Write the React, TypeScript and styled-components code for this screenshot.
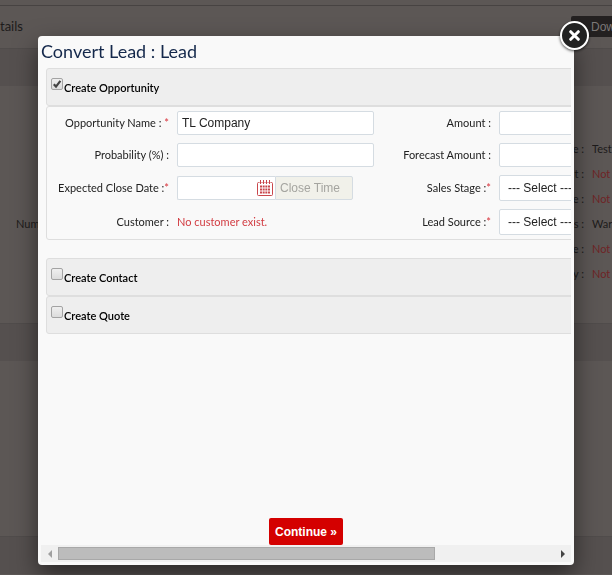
import React, { useRef, useState } from "react";
import styled, { createGlobalStyle } from "styled-components";

const GlobalStyle = createGlobalStyle`
  * { box-sizing: border-box; }
  html, body, #root { height: 100%; }
  body {
    margin: 0;
    overflow: hidden;
    background: #5c5755;
    font-family: Lato, "Liberation Sans", sans-serif;
    font-size: 11px;
    color: #222;
  }
  button, input, select { font-family: "Liberation Sans", Arial, sans-serif; font-size: 12px; }
`;

/* Dimmed page behind the dialog */

const Page = styled.main`
  min-height: 100%;
  padding-top: 5px;
  color: #1d1b1b;
`;

const PageHeader = styled.header`
  display: flex;
  align-items: flex-start;
  justify-content: space-between;
  height: 43px;
  padding-top: 10px;
  border-top: 1px solid #474342;
`;

const PageTitle = styled.h1`
  margin: 0;
  font-size: 13px;
  line-height: 21px;
  font-weight: 400;
`;

const DownloadButton = styled.button`
  width: 41px;
  height: 21px;
  padding: 0 0 0 20px;
  border: 0;
  border-radius: 2px 0 0 2px;
  background: #232020;
  color: #7d7978;
  text-align: left;
  white-space: nowrap;
  overflow: hidden;
`;

const Band = styled.div`
  height: 38px;
  background: #55504f;
  border-top: 1px solid #504c4b;
`;

const PageBody = styled.section`
  display: flex;
  justify-content: space-between;
  height: 237px;
  padding-top: 50px;
  line-height: 25px;
`;

const PageGap = styled.section`
  height: 175px;
`;

const LeftLabel = styled.div`
  padding: 75px 0 0 16px;
`;

const Facts = styled.dl`
  display: grid;
  grid-template-columns: auto 20px;
  grid-auto-rows: 25px;
  column-gap: 8px;
  margin: 0;
  white-space: nowrap;
`;

const FactName = styled.dt`
  text-align: right;
`;

const FactValue = styled.dd<{ $missing: boolean }>`
  margin: 0;
  overflow: hidden;
  color: ${(p) => (p.$missing ? "#6f2426" : "#1d1b1b")};
`;

/* Dialog */

const Dialog = styled.div`
  position: fixed;
  inset: 36px 38px 10px 38px;
  display: flex;
  flex-direction: column;
  padding: 3px;
  border-radius: 4px;
  background: #f9f9f9;
  box-shadow: 0 10px 25px rgba(0, 0, 0, 0.5);
`;

const CloseButton = styled.button`
  position: absolute;
  top: -15px;
  right: -15px;
  width: 29px;
  height: 29px;
  padding: 0;
  border: 2px solid #fff;
  border-radius: 50%;
  background: #222;
  box-shadow: 0 1px 3px rgba(0, 0, 0, 0.7);
  display: grid;
  place-items: center;
`;

const Viewport = styled.div`
  flex: 1;
  min-height: 0;
  overflow: hidden;
`;

const Content = styled.form`
  width: 697px;
`;

const Title = styled.h2`
  margin: 0;
  height: 29px;
  font-size: 18px;
  line-height: 25px;
  font-weight: 400;
  color: #14284b;
`;

const Sections = styled.div`
  padding: 0 5px;
`;

const SectionHead = styled.label`
  display: flex;
  align-items: center;
  height: 38px;
  padding-left: 4px;
  border: 1px solid #dedede;
  border-radius: 3px;
  background: #eee;
  color: #000;
  font-weight: 600;
`;

const Tick = styled.input`
  appearance: none;
  width: 12px;
  height: 12px;
  margin: 0 1px 6px 0;
  border: 1px solid #a3a3a3;
  border-radius: 2px;
  background: linear-gradient(#efefef, #dcdcdc);
  &:checked {
    background: url("data:image/svg+xml,%3Csvg xmlns='http://www.w3.org/2000/svg' viewBox='0 0 10 10'%3E%3Cpath d='M1.8 5.2 4 7.6 8.4 1.8' fill='none' stroke='%23444' stroke-width='2.2'/%3E%3C/svg%3E"),
      linear-gradient(#efefef, #dcdcdc);
  }
`;

const Fields = styled.div`
  display: grid;
  grid-template-columns: 122px 197px 109px 197px;
  grid-template-rows: 24px 24px 26px 26px;
  gap: 8px;
  align-items: center;
  margin-bottom: 18px;
  padding: 4px 0;
  border: 1px solid #dedede;
  border-radius: 3px;
`;

const FieldLabel = styled.label`
  text-align: right;
  white-space: nowrap;
  line-height: 16px;
`;

const Required = styled.span`
  color: #d9363e;
`;

const TextBox = styled.input`
  width: 100%;
  height: 24px;
  padding: 0 4px;
  border: 1px solid #d5dce2;
  border-radius: 2px;
  background: #fff;
  color: #222;
`;

const Select = styled.select`
  appearance: none;
  width: 100%;
  height: 26px;
  padding: 0 8px;
  border: 1px solid #d5dce2;
  border-radius: 2px;
  background: #fff;
  color: #222;
`;

const DateGroup = styled.div`
  display: flex;
  height: 24px;
`;

const DateBox = styled.div`
  display: flex;
  align-items: center;
  width: 98px;
  padding-right: 2px;
  border: 1px solid #d5dce2;
  border-right: 0;
  border-radius: 2px 0 0 2px;
  background: #fff;
`;

const DateInput = styled.input`
  flex: 1;
  min-width: 0;
  height: 22px;
  padding: 0 4px;
  border: 0;
  background: none;
`;

const IconButton = styled.button`
  display: flex;
  padding: 0;
  border: 0;
  background: none;
`;

const TimeInput = styled.input`
  width: 78px;
  padding: 0 4px;
  border: 1px solid #d5dce2;
  border-radius: 0 2px 2px 0;
  background: #f1f1ea;
  &::placeholder { color: #a5a5a0; opacity: 1; }
`;

const Notice = styled.span`
  line-height: 16px;
  color: #d23c42;
`;

const Footer = styled.div`
  display: flex;
  justify-content: center;
`;

const ContinueButton = styled.button`
  height: 27px;
  padding: 0 6px;
  border: 0;
  border-radius: 2px;
  background: #d40000;
  color: #fff;
  font-weight: 700;
`;

const Scrollbar = styled.div`
  display: flex;
  height: 17px;
  background: #f0f0f0;
`;

const ArrowButton = styled.button`
  width: 17px;
  padding: 0;
  border: 0;
  background: none;
  display: grid;
  place-items: center;
`;

const Track = styled.div`
  flex: 1;
  padding: 2px 0;
`;

const Thumb = styled.div`
  width: 76%;
  height: 13px;
  border: 1px solid #a8a8a8;
  background: #bcbcbc;
`;

const CalendarIcon = () => (
  <svg width="16" height="16" viewBox="0 0 16 16" fill="none" stroke="#c9474c" aria-hidden="true">
    <path d="M2.5 2.5h-1a1 1 0 0 0-1 1v11a1 1 0 0 0 1 1h13a1 1 0 0 0 1-1v-11a1 1 0 0 0-1-1h-1M4.5 2.5h1M7.5 2.5h1M10.5 2.5h1" />
    <path d="M3.5 0v4M6.5 0v4M9.5 0v4M12.5 0v4" />
    <path d="M3 6.5h10M3 9.5h10M3 12.5h10" strokeWidth="2" strokeDasharray="2 0.67" />
  </svg>
);

const CloseIcon = () => (
  <svg width="11" height="11" viewBox="0 0 11 11" stroke="#fff" strokeWidth="3" strokeLinecap="round" aria-hidden="true">
    <path d="M1.7 1.7l7.6 7.6M9.3 1.7L1.7 9.3" />
  </svg>
);

const facts: [string, string, boolean][] = [
  ["e :", "Test", false],
  ["t :", "Not", true],
  ["e :", "Not", true],
  ["s :", "War", false],
  ["e :", "Not", true],
  ["y :", "Not", true],
];

export default function App() {
  const viewport = useRef<HTMLDivElement>(null);
  const [offset, setOffset] = useState(0);

  const scroll = (step: number) => {
    const el = viewport.current;
    if (!el) return;
    el.scrollLeft += step;
    setOffset((el.scrollLeft / el.scrollWidth) * 100);
  };

  return (
    <>
      <GlobalStyle />
      <Page>
        <PageHeader>
          <PageTitle>tails</PageTitle>
          <DownloadButton type="button">Dow</DownloadButton>
        </PageHeader>
        <Band />
        <PageBody>
          <LeftLabel>Num</LeftLabel>
          <Facts>
            {facts.map(([name, value, missing], i) => (
              <React.Fragment key={i}>
                <FactName>{name}</FactName>
                <FactValue $missing={missing}>{value}</FactValue>
              </React.Fragment>
            ))}
          </Facts>
        </PageBody>
        <Band />
        <PageGap />
        <Band />
      </Page>

      <Dialog role="dialog" aria-labelledby="dialog-title">
        <CloseButton type="button" aria-label="Close">
          <CloseIcon />
        </CloseButton>
        <Viewport ref={viewport}>
          <Content id="convert-form" onSubmit={(e) => e.preventDefault()}>
            <Title id="dialog-title">Convert Lead : Lead</Title>
            <Sections>
              <SectionHead>
                <Tick type="checkbox" defaultChecked />
                Create Opportunity
              </SectionHead>
              <Fields>
                <FieldLabel htmlFor="name">
                  Opportunity Name : <Required>*</Required>
                </FieldLabel>
                <TextBox id="name" defaultValue="TL Company" />
                <FieldLabel htmlFor="amount">Amount :</FieldLabel>
                <TextBox id="amount" />

                <FieldLabel htmlFor="probability">Probability (%) :</FieldLabel>
                <TextBox id="probability" />
                <FieldLabel htmlFor="forecast">Forecast Amount :</FieldLabel>
                <TextBox id="forecast" />

                <FieldLabel htmlFor="close-date">
                  Expected Close Date :<Required>*</Required>
                </FieldLabel>
                <DateGroup>
                  <DateBox>
                    <DateInput id="close-date" />
                    <IconButton type="button" aria-label="Pick a date">
                      <CalendarIcon />
                    </IconButton>
                  </DateBox>
                  <TimeInput placeholder="Close Time" aria-label="Close Time" disabled />
                </DateGroup>
                <FieldLabel htmlFor="stage">
                  Sales Stage :<Required>*</Required>
                </FieldLabel>
                <Select id="stage">
                  <option>--- Select ---</option>
                </Select>

                <FieldLabel as="span">Customer :</FieldLabel>
                <Notice>No customer exist.</Notice>
                <FieldLabel htmlFor="source">
                  Lead Source :<Required>*</Required>
                </FieldLabel>
                <Select id="source">
                  <option>--- Select ---</option>
                </Select>
              </Fields>
              <SectionHead>
                <Tick type="checkbox" />
                Create Contact
              </SectionHead>
              <SectionHead>
                <Tick type="checkbox" />
                Create Quote
              </SectionHead>
            </Sections>
          </Content>
        </Viewport>
        <Footer>
          <ContinueButton type="submit" form="convert-form">
            Continue »
          </ContinueButton>
        </Footer>
        <Scrollbar>
          <ArrowButton type="button" aria-label="Scroll left" onClick={() => scroll(-40)}>
            <svg width="4" height="8" viewBox="0 0 4 8" fill="#a0a0a0">
              <path d="M4 0v8L0 4z" />
            </svg>
          </ArrowButton>
          <Track>
            <Thumb style={{ marginLeft: `${offset}%` }} />
          </Track>
          <ArrowButton type="button" aria-label="Scroll right" onClick={() => scroll(40)}>
            <svg width="4" height="8" viewBox="0 0 4 8" fill="#444">
              <path d="M0 0v8l4-4z" />
            </svg>
          </ArrowButton>
        </Scrollbar>
      </Dialog>
    </>
  );
}
